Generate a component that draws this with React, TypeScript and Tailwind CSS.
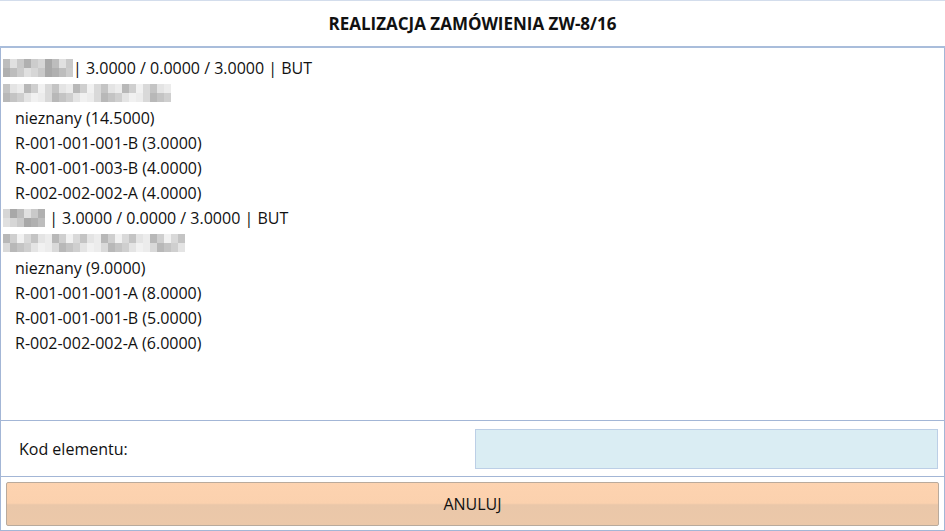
import React from "react";

const FONT = { fontFamily: '"Open Sans", "Noto Sans", sans-serif' };

// deterministic grey mosaic standing in for the blurred product names
function Mosaic({ width, seed, light = false }: { width: number; seed: number; light?: boolean }) {
  const cells = Math.floor(width / 7);
  const tones = light
    ? ["#e4e4e4", "#d9d9d9", "#cfcfcf", "#ececec", "#c4c4c4", "#f1f1f1", "#b8b8b8"]
    : ["#c9c9c9", "#bdbdbd", "#d6d6d6", "#b0b0b0", "#e0e0e0", "#a8a8a8", "#cccccc"];
  return (
    <span className="inline-flex h-[18px] align-middle">
      {Array.from({ length: cells }).map((_, i) => (
        <span key={i} className="flex w-[7px] flex-col">
          <span className="h-[9px]" style={{ background: tones[(i * 3 + seed) % tones.length] }} />
          <span className="h-[9px]" style={{ background: tones[(i * 5 + seed + 2) % tones.length] }} />
        </span>
      ))}
    </span>
  );
}

const rows: { kind: "head" | "name" | "loc"; text?: string; w?: number; seed?: number }[] = [
  { kind: "head", text: "| 3.0000 / 0.0000 / 3.0000 | BUT", w: 74, seed: 1 },
  { kind: "name", w: 173, seed: 4 },
  { kind: "loc", text: "nieznany (14.5000)" },
  { kind: "loc", text: "R-001-001-001-B (3.0000)" },
  { kind: "loc", text: "R-001-001-003-B (4.0000)" },
  { kind: "loc", text: "R-002-002-002-A (4.0000)" },
  { kind: "head", text: " | 3.0000 / 0.0000 / 3.0000 | BUT", w: 46, seed: 2 },
  { kind: "name", w: 186, seed: 6 },
  { kind: "loc", text: "nieznany (9.0000)" },
  { kind: "loc", text: "R-001-001-001-A (8.0000)" },
  { kind: "loc", text: "R-001-001-001-B (5.0000)" },
  { kind: "loc", text: "R-002-002-002-A (6.0000)" },
];

export default function App() {
  return (
    <div className="flex h-[531px] w-[945px] flex-col bg-white text-[#111]" style={FONT}>
      <header className="flex h-[48px] items-center justify-center border-t border-b-2 border-t-[#d3ddec] border-b-[#a9bddb] bg-white">
        <h1 className="text-[17px] font-bold">REALIZACJA ZAMÓWIENIA ZW-8/16</h1>
      </header>

      <section className="h-[373px] border-x border-b border-[#a3b6d6] pt-[7px] pl-[2px] text-[16px]">
        {rows.map((r, i) => (
          <div key={i} className="flex h-[25px] items-center whitespace-pre">
            {r.kind === "head" && (
              <>
                <Mosaic width={r.w!} seed={r.seed!} />
                <span>{r.text}</span>
              </>
            )}
            {r.kind === "name" && <Mosaic width={r.w!} seed={r.seed!} light />}
            {r.kind === "loc" && <span className="pl-[12px]">{r.text}</span>}
          </div>
        ))}
      </section>

      <div className="flex h-[56px] items-center justify-between border-x border-b border-[#a3b6d6] pr-[6px] pl-[18px] text-[16px]">
        <span>Kod elementu:</span>
        <div className="h-[40px] w-[463px] border border-[#bccfe6] bg-[#daedf3]" />
      </div>

      <div className="flex flex-1 border-x border-b border-[#a3b6d6] px-[5px] pt-[5px] pb-[4px]">
        <button
          type="button"
          className="flex flex-1 items-center justify-center rounded-[2px] border border-[#b9aa9c] bg-[linear-gradient(#fdd3b0_0%,#fbd1ae_48%,#eac7a9_52%,#ecc8a9_100%)] text-[16px]"
        >
          ANULUJ
        </button>
      </div>
    </div>
  );
}
